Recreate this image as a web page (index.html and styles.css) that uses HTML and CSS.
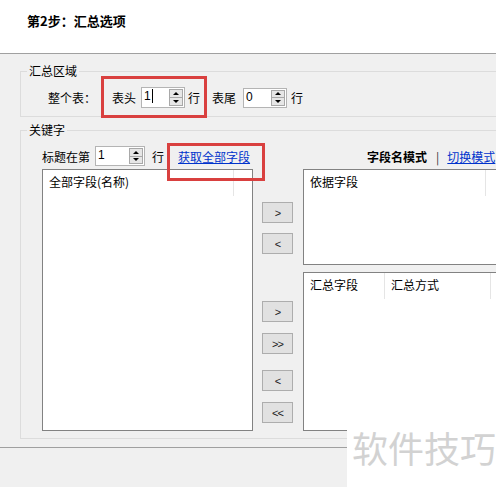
FILE: index.html
```html
<!DOCTYPE html>
<html lang="zh-CN">
<head>
<meta charset="utf-8">
<title>汇总选项</title>
<link rel="stylesheet" href="styles.css">
</head>
<body>
<div class="page">
  <div class="header"><h1 class="title">第2步：汇总选项</h1></div>
  <div class="content">
    <fieldset class="group group-area">
      <legend class="legend">汇总区域</legend>
      <div class="row-area">
        <span class="lbl-whole">整个表：</span>
        <span class="lbl-head">表头</span>
        <div class="spin"><span class="val"><span class="caret">1</span></span><span class="arrows"><span class="up"></span><span class="down"></span></span></div>
        <span class="lbl-row1">行</span>
        <span class="lbl-tail">表尾</span>
        <div class="spin spin-tail"><span class="val">0</span><span class="arrows"><span class="up"></span><span class="down"></span></span></div>
        <span class="lbl-row2">行</span>
      </div>
    </fieldset>
    <fieldset class="group group-key">
      <legend class="legend">关键字</legend>
      <div class="row-key">
        <span class="lbl-title">标题在第</span>
        <div class="spin spin-wide"><span class="val">1</span><span class="arrows"><span class="up"></span><span class="down"></span></span></div>
        <span class="lbl-row3">行</span>
        <a class="link link-all" href="#">获取全部字段</a>
        <span class="mode"><b class="mode-name">字段名模式</b><span class="sep">|</span><a class="link" href="#">切换模式</a></span>
      </div>
      <div class="lists">
        <div class="listbox list-all">
          <div class="lhead"><span class="col col-all">全部字段(名称)</span></div>
        </div>
        <div class="btns">
          <div class="btn b1">&gt;</div>
          <div class="btn b2">&lt;</div>
          <div class="btn b3">&gt;</div>
          <div class="btn b4">&gt;&gt;</div>
          <div class="btn b5">&lt;</div>
          <div class="btn b6">&lt;&lt;</div>
        </div>
        <div class="right">
          <div class="listbox list-basis">
            <div class="lhead"><span class="col col-basis">依据字段</span></div>
          </div>
          <div class="listbox list-sum">
            <div class="lhead"><span class="col col-sumf">汇总字段</span><span class="col col-summ">汇总方式</span></div>
          </div>
        </div>
      </div>
    </fieldset>
  </div>
  <div class="footer"></div>
  <div class="mark mark-1"></div>
  <div class="mark mark-2"></div>
  <div class="watermark">软件技巧</div>
</div>
</body>
</html>
```
FILE: styles.css
```css
html, body {
  margin: 0;
  padding: 0;
}
body {
  width: 496px;
  height: 487px;
  overflow: hidden;
  background: #f0f0f0;
  font-family: "Noto Sans CJK SC", "Liberation Sans", sans-serif;
  font-size: 12px;
  color: #000;
}
.page {
  position: relative;
  width: 496px;
  height: 487px;
  overflow: hidden;
}
.header {
  height: 53px;
  background: #fff;
  border-bottom: 1px solid #a0a0a0;
  box-sizing: border-box;
  height: 54px;
}
.title {
  margin: 0;
  padding: 12px 0 0 27px;
  font-size: 13px;
  line-height: 17px;
  font-weight: bold;
}
.content {
  padding-left: 20px;
  width: 520px;
}
.group {
  margin: 0;
  padding: 0;
  border: 1px solid #dcdcdc;
  border-right: none;
  min-width: 0;
}
.legend {
  margin-left: 6px;
  padding: 0 2px;
  line-height: 14px;
  height: 14px;
}
.group-area {
  margin-top: 10px;
}
.row-area {
  display: flex;
  align-items: center;
  height: 21px;
  padding: 9px 0 8px 27px;
}
.lbl-whole { width: 64px; }
.lbl-head { margin-right: 5px; }
.lbl-row1 { margin-left: 3px; }
.lbl-tail { margin-left: 12px; margin-right: 7px; }
.lbl-row2 { margin-left: 4px; }

.spin {
  display: flex;
  width: 44px;
  height: 21px;
  box-sizing: border-box;
  border: 1px solid #b4b4b4;
  background: #fff;
}
.spin-tail { height: 20px; }
.spin-wide { width: 50px; height: 20px; }
.val {
  flex: 1;
  padding-left: 2px;
  line-height: 17px;
  font-family: "Liberation Sans", sans-serif;
  font-size: 12px;
}
.caret {
  border-right: 1px solid #000;
  padding-right: 1px;
}
.arrows {
  display: flex;
  flex-direction: column;
  width: 14px;
  margin: 1px 1px 1px 0;
  border: 1px solid #a8a8a8;
  background: #e6e6e6;
  box-sizing: border-box;
}
.up, .down {
  flex: 1;
  display: flex;
  align-items: center;
  justify-content: center;
}
.up { border-bottom: 1px solid #a8a8a8; }
.up::after {
  content: "";
  border-left: 3px solid transparent;
  border-right: 3px solid transparent;
  border-bottom: 3px solid #000;
}
.down::after {
  content: "";
  border-left: 3px solid transparent;
  border-right: 3px solid transparent;
  border-top: 3px solid #000;
}

.group-key {
  margin-top: 6px;
}
.row-key {
  display: flex;
  align-items: center;
  height: 20px;
  padding: 9px 0 0 21px;
  white-space: nowrap;
}
.lbl-title { margin-right: 5px; }
.lbl-row3 { margin-left: 7px; }
.link {
  color: #0033cc;
  text-decoration: underline;
}
.link-all { margin-left: 14px; }
.mode {
  margin-left: 117px;
  display: flex;
  align-items: center;
}
.mode-name { font-weight: bold; }
.sep { margin: 0 8px 0 9px; color: #333; }

.lists {
  display: flex;
  padding: 3px 0 7px 21px;
}
.listbox {
  background: #fff;
  border: 1px solid #828282;
  box-sizing: border-box;
}
.list-all {
  width: 211px;
  height: 262px;
}
.lhead {
  display: flex;
  height: 26px;
}
.col {
  box-sizing: border-box;
  padding: 5px 0 0 6px;
  line-height: 14px;
  border-right: 1px solid #e5e5e5;
}
.col-all { width: 191px; }
.col-basis { width: 182px; }
.col-sumf { width: 81px; }
.col-summ { width: 106px; }

.btns {
  display: flex;
  flex-direction: column;
  width: 31px;
  margin: 0 10px 0 9px;
}
.btn {
  height: 21px;
  box-sizing: border-box;
  border: 1px solid #adadad;
  background: #e1e1e1;
  display: flex;
  align-items: center;
  justify-content: center;
  font-family: "Liberation Sans", sans-serif;
  font-size: 11px;
  color: #222;
  letter-spacing: -1px;
}
.b1 { margin-top: 33px; }
.b2 { margin-top: 10px; }
.b3 { margin-top: 47px; }
.b4 { margin-top: 11px; }
.b5 { margin-top: 16px; }
.b6 { margin-top: 11px; }

.right {
  display: flex;
  flex-direction: column;
  gap: 7px;
  width: 210px;
}
.list-basis { height: 96px; }
.list-sum { height: 159px; }

.footer {
  margin-top: 8px;
  border-top: 1px solid #a0a0a0;
  height: 40px;
}

.mark {
  position: absolute;
  border: 3px solid #d9403f;
  box-sizing: border-box;
}
.mark-1 { left: 101px; top: 76px; width: 106px; height: 42px; }
.mark-2 { left: 167px; top: 143px; width: 98px; height: 38px; }

.watermark {
  position: absolute;
  left: 347px;
  top: 425px;
  width: 149px;
  height: 62px;
  background: #fff;
  color: #d2d2d2;
  font-size: 36px;
  line-height: 44px;
  padding-left: 5px;
  box-sizing: border-box;
  white-space: nowrap;
}
```
